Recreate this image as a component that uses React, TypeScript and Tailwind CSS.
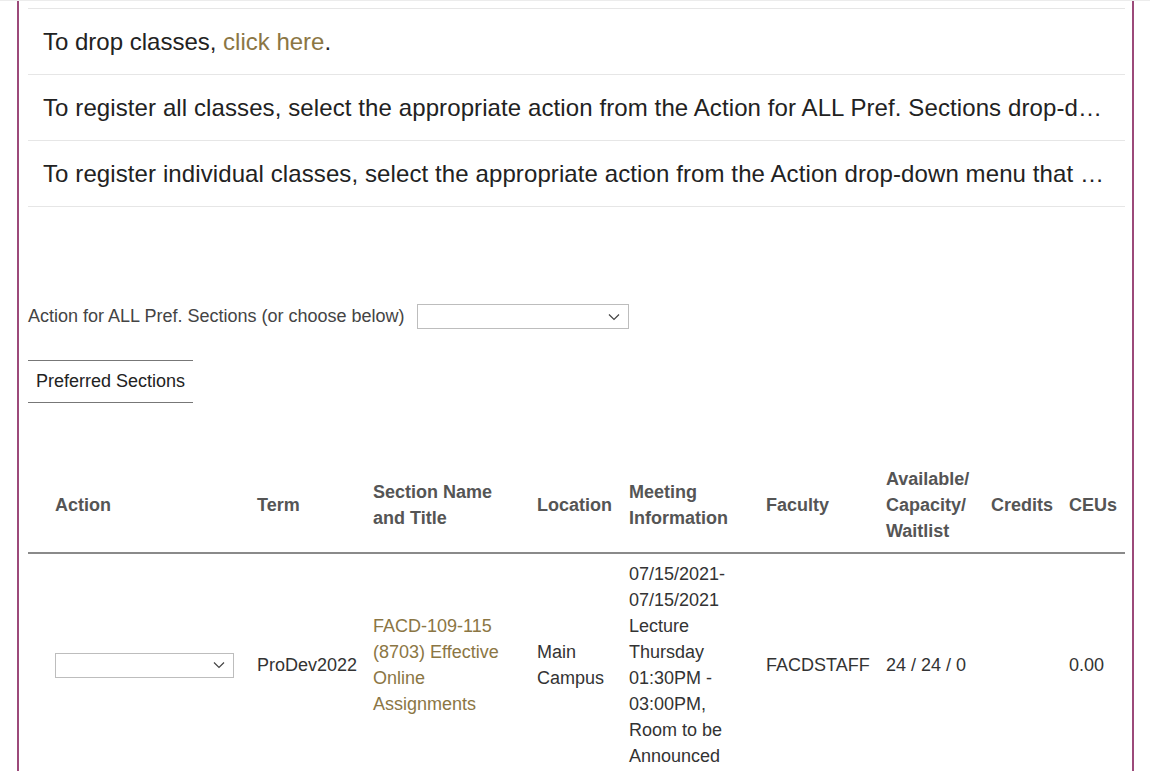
import React from "react";

const Chevron = () => (
  <svg width="12" height="8" viewBox="0 0 12 8" className="absolute right-[8px] top-1/2 -translate-y-1/2">
    <path d="M1 1.5 L6 6.5 L11 1.5" fill="none" stroke="#444" strokeWidth="1.2" />
  </svg>
);

const Select = ({ w }: { w: string }) => (
  <div className={`relative h-[25px] border border-[#bdbdbd] bg-white ${w}`}>
    <Chevron />
  </div>
);

export default function App() {
  const font = { fontFamily: '"Liberation Sans", Arial, sans-serif' };
  const th = "px-[8px] pt-0 pb-[8px] align-middle";
  const td = "px-[8px] pt-[7px] pb-0 align-middle";
  return (
    <div style={font} className="w-[1150px] h-[771px] overflow-hidden bg-white border-t border-[#ececec]">
      <div className="ml-[17px] w-[1117px] h-full border-l-2 border-r-2 border-[#9c4a7a] pl-[9px] pr-[7px] pt-[7px]">
        <div className="w-[1097px]">
          <div className="border-t border-[#e6e6e6] h-[66px] flex items-center px-[15px] text-[24px] text-[#222]">
            <span>
              To drop classes, <span className="text-[#8b7644]">click here</span>.
            </span>
          </div>
          <div className="border-t border-[#e6e6e6] h-[66px] flex items-center pl-[15px] pr-[20px] text-[24px] text-[#222] tracking-[0.1px]">
            <span className="block whitespace-nowrap overflow-hidden text-ellipsis">
              To register all classes, select the appropriate action from the Action for ALL Pref. Sections drop-down menu and click Submit.
            </span>
          </div>
          <div className="border-t border-b border-[#e6e6e6] h-[67px] flex items-center pl-[15px] pr-[18px] text-[24px] text-[#222] tracking-[0.1px]">
            <span className="block whitespace-nowrap overflow-hidden text-ellipsis">
              To register individual classes, select the appropriate action from the Action drop-down menu that appears with each section.
            </span>
          </div>

          <div className="mt-[96px] flex items-center gap-[12px] text-[18px] text-[#444]">
            <span>Action for ALL Pref. Sections (or choose below)</span>
            <Select w="w-[212px]" />
          </div>

          <div className="mt-[30px] w-[165px] border-t border-b border-[#777] h-[43px] flex items-center pl-[8px] text-[18px] text-[#222]">
            Preferred Sections
          </div>

          <table className="mt-[63px] table-fixed border-collapse w-[1097px] text-[18px] leading-[26px]">
            <colgroup>
              <col className="w-[221px]" />
              <col className="w-[116px]" />
              <col className="w-[164px]" />
              <col className="w-[92px]" />
              <col className="w-[137px]" />
              <col className="w-[120px]" />
              <col className="w-[105px]" />
              <col className="w-[78px]" />
              <col className="w-[64px]" />
            </colgroup>
            <thead>
              <tr className="border-b-2 border-[#8a8a8a] text-[#555] font-bold text-left">
                <th className={`${th} pl-[27px]`}>Action</th>
                <th className={th}>Term</th>
                <th className={th}>Section Name and Title</th>
                <th className={`${th} whitespace-nowrap`}>Location</th>
                <th className={th}>Meeting Information</th>
                <th className={th}>Faculty</th>
                <th className={th}>Available/ Capacity/ Waitlist</th>
                <th className={`${th} whitespace-nowrap`}>Credits</th>
                <th className={`${th} whitespace-nowrap`}>CEUs</th>
              </tr>
            </thead>
            <tbody className="text-[#333]">
              <tr>
                <td className={`${td} pl-[27px]`}>
                  <Select w="w-[179px]" />
                </td>
                <td className={`${td} whitespace-nowrap`}>ProDev2022</td>
                <td className={`${td} text-[#8b7644]`}>FACD-109-115 (8703) Effective Online Assignments</td>
                <td className={td}>Main Campus</td>
                <td className={td}>
                  07/15/2021-07/15/2021 Lecture Thursday 01:30PM - 03:00PM, Room to be Announced
                </td>
                <td className={`${td} whitespace-nowrap`}>FACDSTAFF</td>
                <td className={`${td} whitespace-nowrap`}>24 / 24 / 0</td>
                <td className={td}></td>
                <td className={`${td} whitespace-nowrap`}>0.00</td>
              </tr>
            </tbody>
          </table>
        </div>
      </div>
    </div>
  );
}
